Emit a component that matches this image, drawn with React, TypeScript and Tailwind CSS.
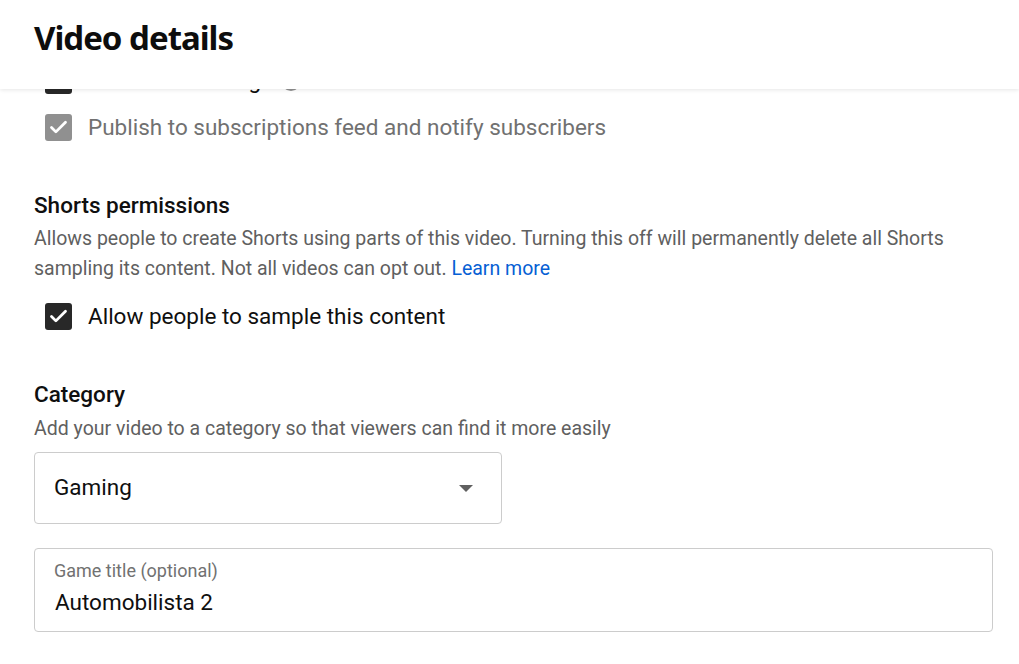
import { Check } from "lucide-react";

function Box({ tone }: { tone: "dark" | "muted" }) {
  const bg = tone === "dark" ? "bg-[#282828]" : "bg-[#909090]";
  return (
    <span className={`flex h-[27px] w-[27px] shrink-0 items-center justify-center rounded-[3px] ${bg}`}>
      <Check size={21} strokeWidth={3.2} className="text-white" />
    </span>
  );
}

function CheckRow({ label, tone, textClass, extra }: { label: string; tone: "dark" | "muted"; textClass: string; extra?: React.ReactNode }) {
  return (
    <div className="flex h-[27px] items-center gap-[16px] pl-[11px]">
      <Box tone={tone} />
      <span className={`text-[22.5px] leading-[27px] ${textClass}`}>{label}</span>
      {extra}
    </div>
  );
}

export default function App() {
  return (
    <div className="relative h-[664px] w-full overflow-hidden bg-white font-['Roboto',sans-serif]">
      {/* header sits over the scrolled content */}
      <header className="absolute inset-x-0 top-0 z-10 h-[89px] bg-white px-[34px] pt-[16px] shadow-[0_1px_4px_rgba(0,0,0,0.1)]">
        <h1 className="font-['Noto_Sans',sans-serif] text-[33px] font-bold leading-[44px] tracking-[-1px] text-[#0d0d0d]">
          Video details
        </h1>
      </header>

      <main className="flex flex-col pl-[34px] pr-[26px] pt-[67px]">
        <div className="flex flex-col gap-[20px]">
          <CheckRow
            label="Allow embedding"
            tone="dark"
            textClass="text-[#0f0f0f]"
            extra={<span className="ml-[4px] h-[20px] w-[20px] rounded-full bg-[#909090]" />}
          />
          <CheckRow label="Publish to subscriptions feed and notify subscribers" tone="muted" textClass="text-[#717171]" />
        </div>

        <h2 className="mt-[49px] text-[22.5px] font-medium leading-[30px] text-[#0f0f0f]">Shorts permissions</h2>
        <p className="mt-[4px] text-[19.5px] leading-[30px] text-[#606060]">
          Allows people to create Shorts using parts of this video. Turning this off will permanently delete all Shorts
          sampling its content. Not all videos can opt out. <span className="text-[#065fd4]">Learn more</span>
        </p>
        <div className="mt-[19px]">
          <CheckRow label="Allow people to sample this content" tone="dark" textClass="text-[#0f0f0f]" />
        </div>

        <h2 className="mt-[49px] text-[22.5px] font-medium leading-[30px] text-[#0f0f0f]">Category</h2>
        <p className="mt-[5px] text-[19.5px] leading-[30px] text-[#606060]">
          Add your video to a category so that viewers can find it more easily
        </p>

        <div className="mt-[8px] flex h-[72px] w-[468px] items-center justify-between rounded-[4px] border border-[#cccccc] pl-[19px] pr-[28px]">
          <span className="text-[22.5px] text-[#0f0f0f]">Gaming</span>
          <span className="h-0 w-0 border-x-[7.5px] border-t-[7.5px] border-x-transparent border-t-[#606060]" />
        </div>

        <div className="mt-[24px] flex h-[84px] flex-col rounded-[4px] border border-[#cccccc] px-[19px] pt-[10px]">
          <span className="text-[18px] leading-[24px] text-[#717171]">Game title (optional)</span>
          <span className="mt-[4px] pl-[1px] text-[22.5px] leading-[30px] text-[#0f0f0f]">Automobilista 2</span>
        </div>
      </main>
    </div>
  );
}
